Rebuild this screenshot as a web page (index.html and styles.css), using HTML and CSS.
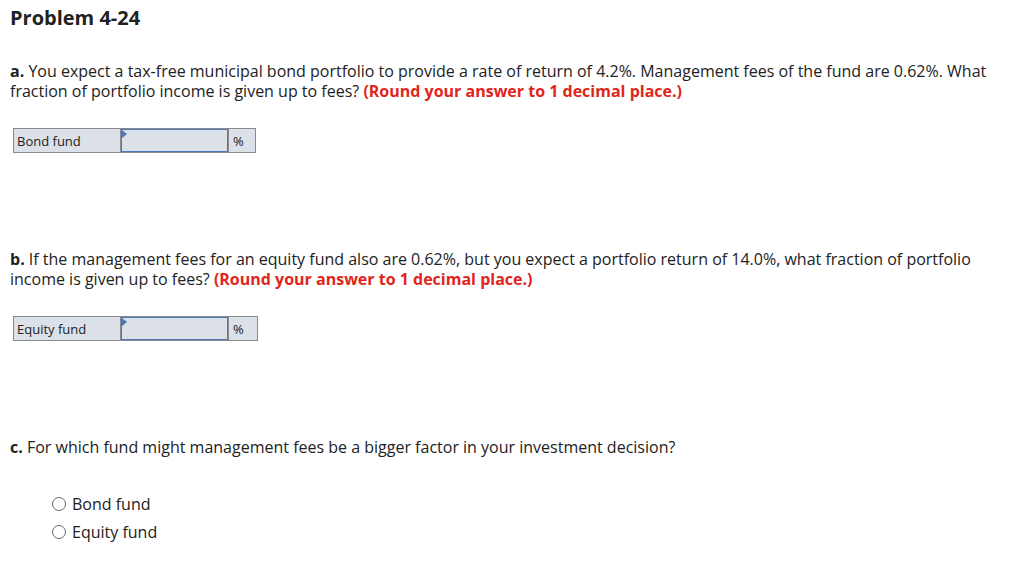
FILE: index.html
```html
<!DOCTYPE html>
<html lang="en">

<head>
    <meta charset="UTF-8">
    <meta name="viewport" content="width=device-width, initial-scale=1.0">
    <title>Problem 4-24</title>
    <link rel="stylesheet" href="styles.css">
</head>

<body>
    <h1 class="title">Problem 4-24</h1>

    <p class="question">
        <b>a.</b> You expect a tax-free municipal bond portfolio to provide a rate of return of 4.2%. Management fees of the fund are 0.62%. What fraction of portfolio income is given up to fees? <span class="hint">(Round your answer to 1 decimal place.)</span>
    </p>
    <table class="answer">
        <tr>
            <td class="label">Bond fund</td>
            <td class="field"><input type="text"><span class="flag"></span></td>
            <td class="unit">%</td>
        </tr>
    </table>

    <p class="question part-b">
        <b>b.</b> If the management fees for an equity fund also are 0.62%, but you expect a portfolio return of 14.0%, what fraction of portfolio income is given up to fees? <span class="hint">(Round your answer to 1 decimal place.)</span>
    </p>
    <table class="answer">
        <tr>
            <td class="label">Equity fund</td>
            <td class="field"><input type="text"><span class="flag"></span></td>
            <td class="unit wide">%</td>
        </tr>
    </table>

    <p class="question part-c">
        <b>c.</b> For which fund might management fees be a bigger factor in your investment decision?
    </p>
    <div class="choices">
        <label class="choice"><span class="radio"></span>Bond fund</label>
        <label class="choice"><span class="radio"></span>Equity fund</label>
    </div>
</body>

</html>
```

FILE: styles.css
```css
body {
    margin: 0;
    padding: 0 10px;
    font-family: "Open Sans", "Noto Sans", sans-serif;
    color: #222;
}

.title {
    font-size: 20px;
    font-weight: bold;
    margin: 6px 0 0;
    line-height: 24px;
}

.question {
    font-size: 16px;
    line-height: 20px;
    margin: 31px 0 0;
    max-width: 990px;
}

.question b {
    font-weight: bold;
}

.hint {
    color: #e0261b;
    font-weight: bold;
}

.part-b {
    margin-top: 96px;
}

.part-c {
    margin-top: 96px;
}

.answer {
    border-collapse: collapse;
    margin: 27px 0 0 3px;
    font-size: 13px;
}

.answer td {
    height: 23px;
    padding: 0;
    border: 1px solid #8a8a8a;
    background-color: #dce0e8;
}

.label {
    width: 103px;
    padding-left: 3px !important;
}

.field {
    width: 107px;
    position: relative;
}

.field input {
    display: block;
    box-sizing: border-box;
    width: 107px;
    height: 23px;
    margin: 0;
    border: 1px solid #4a78b8;
    background-color: #dce0e8;
}

.flag {
    position: absolute;
    left: 1px;
    top: 1px;
    width: 0;
    height: 0;
    border-top: 4px solid transparent;
    border-bottom: 4px solid transparent;
    border-left: 5px solid #4a78b8;
}

.unit {
    width: 22px;
    padding-left: 4px !important;
}

.unit.wide {
    width: 24px;
}

.choices {
    margin: 33px 0 0 42px;
    font-size: 16px;
}

.choice {
    display: flex;
    align-items: center;
    height: 28px;
}

.radio {
    width: 12px;
    height: 12px;
    border: 1px solid #666;
    border-radius: 50%;
    margin-right: 6px;
}
```
